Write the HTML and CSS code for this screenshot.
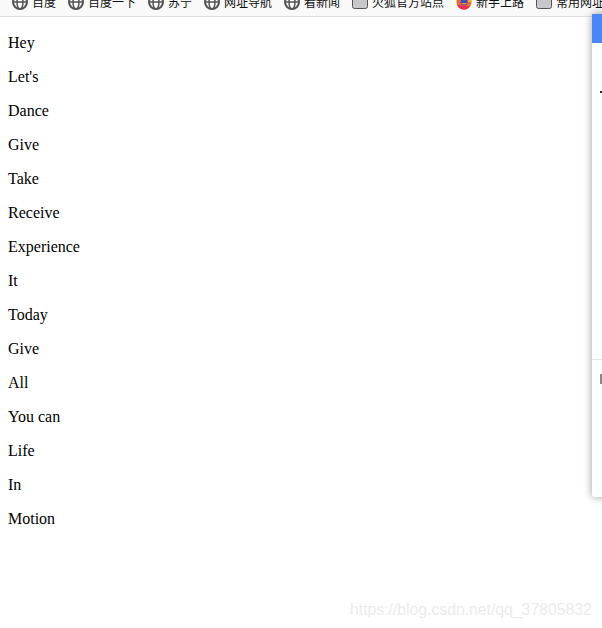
FILE: index.html
```html
<!DOCTYPE html>
<html lang="zh">
<head>
<meta charset="utf-8">
<title>Hey</title>
<link rel="stylesheet" href="styles.css">
</head>
<body>
<nav class="bookmarks">
  <div class="bookmark-row">
    <span class="bookmark"><svg class="icon" viewBox="0 0 16 16"><use href="#globe"/></svg>百度</span>
    <span class="bookmark"><svg class="icon" viewBox="0 0 16 16"><use href="#globe"/></svg>百度一下</span>
    <span class="bookmark"><svg class="icon" viewBox="0 0 16 16"><use href="#globe"/></svg>苏宁</span>
    <span class="bookmark"><svg class="icon" viewBox="0 0 16 16"><use href="#globe"/></svg>网址导航</span>
    <span class="bookmark"><svg class="icon" viewBox="0 0 16 16"><use href="#globe"/></svg>看新闻</span>
    <span class="bookmark"><svg class="icon" viewBox="0 0 16 16"><use href="#folder"/></svg>火狐官方站点</span>
    <span class="bookmark"><svg class="icon" viewBox="0 0 16 16"><use href="#firefox"/></svg>新手上路</span>
    <span class="bookmark"><svg class="icon" viewBox="0 0 16 16"><use href="#folder"/></svg>常用网址</span>
  </div>
</nav>
<svg class="defs" width="0" height="0">
  <defs>
    <g id="globe"><circle cx="8" cy="8" r="7" fill="none" stroke="#555" stroke-width="2"/><ellipse cx="8" cy="8" rx="3" ry="7" fill="none" stroke="#555" stroke-width="1.5"/><path d="M1 8h14" stroke="#555" stroke-width="1.5"/></g>
    <rect id="folder" x="0.5" y="0" width="15" height="14.500" rx="2" fill="#c8c8cc" stroke="#555"/>
    <g id="firefox"><circle cx="8" cy="8" r="7.500" fill="#f26a2a"/><path d="M1 11a7.500 7.500 0 0 0 13 1.500z" fill="#e8304f"/><path d="M11 1.500a7.500 7.500 0 0 1 4.500 6.500l-3 0z" fill="#fdb52f"/><circle cx="8" cy="8" r="3.500" fill="#3c4fc4"/><path d="M5 9a3.500 3.500 0 0 0 6 0z" fill="#f58a2a"/></g>
  </defs>
</svg>
<main class="content">
  <p>Hey</p>
  <p>Let's</p>
  <p>Dance</p>
  <p>Give</p>
  <p>Take</p>
  <p>Receive</p>
  <p>Experience</p>
  <p>It</p>
  <p>Today</p>
  <p>Give</p>
  <p>All</p>
  <p>You can</p>
  <p>Life</p>
  <p>In</p>
  <p>Motion</p>
</main>
<aside class="panel">
  <div class="panel-head"></div>
  <div class="panel-top"><span class="panel-dot"></span></div>
  <div class="panel-bottom"><span class="panel-glyph"></span></div>
</aside>
<div class="watermark">https://blog.csdn.net/qq_37805832</div>
</body>
</html>
```
FILE: styles.css
```css
html, body {
  margin: 0;
  padding: 0;
  background: #fff;
}
body {
  height: 628px;
  overflow: hidden;
  position: relative;
  font-family: "Liberation Serif", serif;
  font-size: 16px;
  color: #000;
}
.bookmarks {
  height: 16px;
  overflow: hidden;
  background: #f9f9fa;
  border-bottom: 1px solid #e0e0e1;
}
.bookmark-row {
  display: flex;
  gap: 12px;
  padding-left: 12px;
  margin-top: -6px;
  height: 16px;
  white-space: nowrap;
}
.bookmark {
  display: flex;
  align-items: center;
  gap: 4px;
  font-family: "Noto Sans CJK SC", sans-serif;
  font-size: 12px;
  line-height: 16px;
  color: #111;
}
.icon {
  width: 16px;
  height: 16px;
  flex: none;
  overflow: visible;
}
.defs {
  position: absolute;
}
.content {
  padding: 1px 8px 0;
}
.content p {
  margin: 16px 0;
  line-height: 18px;
}
.panel {
  position: absolute;
  left: 592px;
  top: 14px;
  width: 40px;
  height: 483px;
  background: #fff;
  border-radius: 3px;
  box-shadow: 0 0 8px rgba(0, 0, 0, 0.4);
}
.panel-head {
  height: 29px;
  background: #4a86f8;
}
.panel-top {
  height: 316px;
  border-bottom: 1px solid #e6e6e6;
  box-sizing: content-box;
  position: relative;
}
.panel-dot {
  position: absolute;
  left: 8px;
  top: 48px;
  width: 2px;
  height: 2px;
  background: #222;
}
.panel-bottom {
  position: relative;
}
.panel-glyph {
  position: absolute;
  left: 8px;
  top: 14px;
  width: 2px;
  height: 10px;
  background: #888;
}
.watermark {
  position: absolute;
  left: 350px;
  top: 601px;
  font-family: "Liberation Sans", sans-serif;
  font-size: 15.750px;
  line-height: 18px;
  color: #ececec;
  white-space: nowrap;
}
```
